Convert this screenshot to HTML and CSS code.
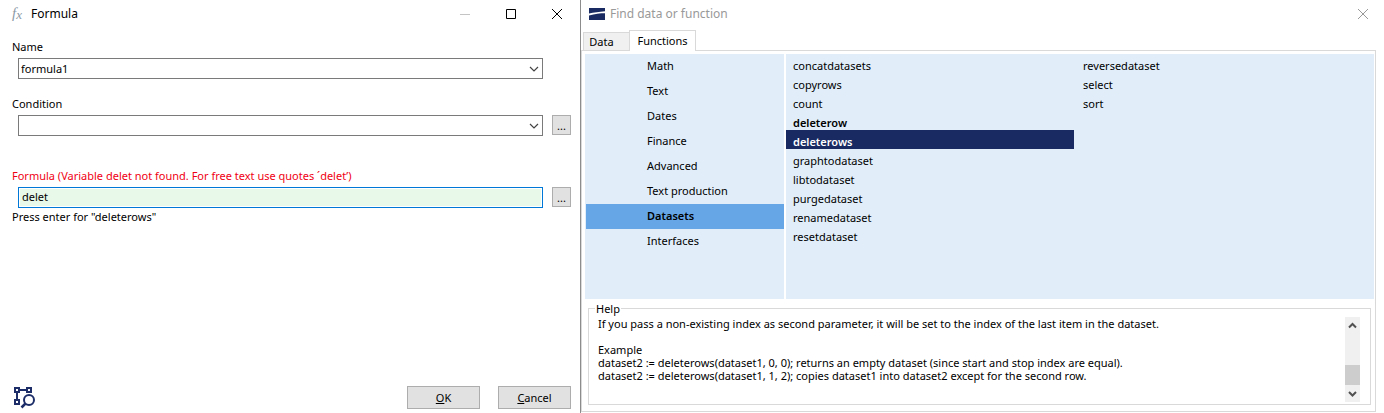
FILE: index.html
```html
<!DOCTYPE html>
<html lang="en">
<head>
<meta charset="utf-8">
<title>Formula</title>
<link rel="stylesheet" href="styles.css">
</head>
<body>
<main class="desktop">
  <section class="window formula" aria-label="Formula">
    <header class="titlebar">
      <span class="fx" aria-hidden="true"><i class="fx-f">f</i><i class="fx-x">x</i></span>
      <h1 class="title">Formula</h1>
      <div class="controls">
        <button class="control" aria-label="Minimize" disabled><svg width="12" height="12" viewBox="0 0 12 12"><path d="M1 6.500h10" stroke="#c4c4c4"/></svg></button>
        <button class="control" aria-label="Maximize"><svg width="12" height="12" viewBox="0 0 12 12"><path d="M1.500 1.500h9v9h-9z" fill="none" stroke="#000"/></svg></button>
        <button class="control" aria-label="Close"><svg width="12" height="12" viewBox="0 0 12 12"><path d="M1 1l10 10M11 1L1 11" stroke="#000"/></svg></button>
      </div>
    </header>
    <form class="form">
      <label class="label" for="name">Name</label>
      <div class="row">
        <div class="combo">
          <select class="field" id="name"><option>formula1</option></select>
          <svg class="chevron" width="10" height="6" viewBox="0 0 10 6"><path d="M1 1l4 4 4-4" fill="none" stroke="#444" stroke-width="1.200"/></svg>
        </div>
      </div>
      <label class="label" for="condition">Condition</label>
      <div class="row">
        <div class="combo">
          <select class="field" id="condition"><option></option></select>
          <svg class="chevron" width="10" height="6" viewBox="0 0 10 6"><path d="M1 1l4 4 4-4" fill="none" stroke="#444" stroke-width="1.200"/></svg>
        </div>
        <button class="button more" type="button" aria-label="Edit condition">...</button>
      </div>
      <label class="label error" for="formula">Formula (Variable delet not found. For free text use quotes ´delet’)</label>
      <div class="row">
        <input class="field active" id="formula" type="text" value="delet" aria-describedby="hint">
        <button class="button more" type="button" aria-label="Edit formula">...</button>
      </div>
      <p class="hint" id="hint">Press enter for "deleterows"</p>
    </form>
    <footer class="footer">
      <svg class="inspect" width="24" height="24" viewBox="0 0 24 24" fill="none" stroke="#1c2d68" stroke-width="2" role="img" aria-label="Inspect">
        <path d="M3 2h4v4H3zM15 2h4v4h-4zM3 14h4v4H3zM7 4h8M5 6v8"/>
        <circle cx="17" cy="14" r="5"/>
        <path d="M13.500 17.500l-4 4" stroke-width="2.500"/>
      </svg>
      <button class="button action"><u>O</u>K</button>
      <button class="button action"><u>C</u>ancel</button>
    </footer>
  </section>

  <section class="window finder" aria-label="Find data or function">
    <header class="titlebar">
      <svg class="logo" width="16" height="12" viewBox="0 0 16 12"><path d="M0 0h16v12H0z" fill="#182a61"/><path d="M0 5.500C5 4.200 10 4.200 16 3.200v2C11 5.200 6 5.600 0 7.500z" fill="#fff"/></svg>
      <h2 class="title muted">Find data or function</h2>
      <div class="controls">
        <button class="control" aria-label="Close"><svg width="12" height="12" viewBox="0 0 12 12"><path d="M1 1l10 10M11 1L1 11" stroke="#999"/></svg></button>
      </div>
    </header>
    <div class="tabs" role="tablist">
      <button class="tab" role="tab" aria-selected="false">Data</button>
      <button class="tab selected" role="tab" aria-selected="true">Functions</button>
    </div>
    <div class="panel" role="tabpanel">
      <div class="browser">
        <nav class="categories">
          <button class="category">Math</button>
          <button class="category">Text</button>
          <button class="category">Dates</button>
          <button class="category">Finance</button>
          <button class="category">Advanced</button>
          <button class="category">Text production</button>
          <button class="category current">Datasets</button>
          <button class="category">Interfaces</button>
        </nav>
        <div class="functions">
          <div class="column">
            <button class="function">concatdatasets</button>
            <button class="function">copyrows</button>
            <button class="function">count</button>
            <button class="function match">deleterow</button>
            <button class="function match picked">deleterows</button>
            <button class="function">graphtodataset</button>
            <button class="function">libtodataset</button>
            <button class="function">purgedataset</button>
            <button class="function">renamedataset</button>
            <button class="function">resetdataset</button>
          </div>
          <div class="column">
            <button class="function">reversedataset</button>
            <button class="function">select</button>
            <button class="function">sort</button>
          </div>
        </div>
      </div>
      <fieldset class="help">
        <legend class="legend">Help</legend>
        <div class="help-text">
          <p>If you pass a non-existing index as second parameter, it will be set to the index of the last item in the dataset.</p>
          <p class="example">Example</p>
          <p>dataset2 := deleterows(dataset1, 0, 0); returns an empty dataset (since start and stop index are equal).</p>
          <p>dataset2 := deleterows(dataset1, 1, 2); copies dataset1 into dataset2 except for the second row.</p>
        </div>
        <div class="scrollbar" aria-hidden="true">
          <svg width="15" height="17" viewBox="0 0 15 17"><path d="M4 10.500l3.500-3.500 3.500 3.500" fill="none" stroke="#505050" stroke-width="2"/></svg>
          <span class="thumb"></span>
          <svg width="15" height="17" viewBox="0 0 15 17"><path d="M4 7l3.500 3.500L11 7" fill="none" stroke="#505050" stroke-width="2"/></svg>
        </div>
      </fieldset>
    </div>
  </section>
</main>
</body>
</html>
```
FILE: styles.css
```css
* { box-sizing: border-box; }

body {
  margin: 0;
  background: #fff;
  color: #000;
  font: 11px/13px "Noto Sans", "Open Sans", sans-serif;
}

button, input, select { font: inherit; color: inherit; }

button {
  padding: 0;
  border: 0;
  background: none;
}

h1, h2, p { margin: 0; }

.desktop {
  display: grid;
  grid-template-columns: 580fr 804fr;
  min-height: 100vh;
}

.window {
  display: flex;
  flex-direction: column;
  min-width: 0;
}

.finder {
  border-left: 1px solid #8c8c8c;
  padding-right: 8px;
}

.titlebar {
  display: flex;
  align-items: center;
  height: 28px;
  padding: 0 17px 0 12px;
}

.finder .titlebar {
  height: 28px;
  padding: 0 7px 0 8px;
}

.title {
  font-size: 12px;
  font-weight: 400;
  line-height: 30px;
}

.muted { color: #999; }

.fx {
  display: flex;
  width: 19px;
  color: #8c9aa6;
  font: 15px/16px "Liberation Serif", serif;
}

.fx-x { font-size: 13px; line-height: 19px; }

.logo { margin-right: 5px; }

.controls {
  display: flex;
  gap: 34px;
  margin-left: auto;
}

.control { display: flex; }

.form {
  flex: 1;
  padding: 12px 9px 0 12px;
}

.label {
  display: block;
  height: 18px;
}

.row {
  display: flex;
  align-items: flex-start;
  height: 21px;
  gap: 9px;
  padding-left: 6px;
  margin-bottom: 18px;
}

.row:has(.more) { margin-bottom: 33px; }

.row:not(:has(.more)) { padding-right: 28px; }

.combo {
  position: relative;
  flex: 1;
}

.field {
  display: block;
  width: 100%;
  height: 21px;
  padding: 0 2px 1px;
  border: 1px solid #7a7a7a;
  border-radius: 0;
  background: #fff;
  appearance: none;
}

.chevron {
  position: absolute;
  right: 4px;
  top: 8px;
  pointer-events: none;
}

.active {
  flex: 1;
  border-color: #0078d7;
  background: #e8f8e9;
  box-shadow: inset 0 0 0 1px #fff;
  outline: 0;
  padding: 0 3px 2px;
}

.error { color: #f00014; }

.row:has(.active) { margin-bottom: 2px; }

.button {
  border: 1px solid #adadad;
  background: #e1e1e1;
}

.more {
  width: 19px;
  height: 20px;
}

.footer {
  display: flex;
  gap: 18px;
  padding: 0 9px 3px 12px;
}

.inspect { margin-right: auto; }

.action {
  width: 73px;
  height: 23px;
}

.tabs {
  display: flex;
  align-items: flex-end;
  height: 22px;
  padding-left: 2px;
}

.tab {
  width: 46px;
  height: 18px;
  border: 1px solid #d9d9d9;
  border-width: 1px 0 0 1px;
  background: #f0f0f0;
  padding-right: 10px;
}

.tab.selected {
  width: 67px;
  height: 21px;
  border-width: 1px 1px 0;
  background: #fff;
  margin-bottom: -1px;
  padding: 0 0 2px;
  z-index: 1;
}

.panel {
  display: flex;
  flex: 1;
  flex-direction: column;
  margin-bottom: 1px;
  border: 1px solid #d9d9d9;
  padding: 3px 1px 6px 3px;
}

.browser {
  display: grid;
  grid-template-columns: 199fr 588fr;
  gap: 2px;
  min-height: 245px;
}

.categories, .functions { background: #e1eefa; }

.categories { padding-left: 1px; }

.category {
  display: block;
  width: 100%;
  height: 25px;
  padding: 0 0 2px 61px;
  text-align: left;
}

.current {
  background: #66a6e7;
  font-weight: 600;
}

.functions {
  display: grid;
  grid-template-columns: 288fr 288fr 8fr;
  gap: 2px;
}

.function {
  display: block;
  width: 100%;
  height: 19px;
  padding: 5px 7px 1px;
  text-align: left;
}

.match { font-weight: 600; }

.picked {
  background: #182a61;
  color: #fff;
}

.help {
  display: flex;
  flex: 1;
  min-width: 0;
  margin: 3px 3px 0;
  border: 1px solid #d9d9d9;
  padding: 2px 10px 2px 9px;
}

.legend {
  margin-left: -3px;
  padding: 0 1px;
}

.help-text { flex: 1; }

.example { margin-top: 13px; }

.scrollbar {
  display: flex;
  flex-direction: column;
  width: 15px;
  background: #f0f0f0;
}

.thumb {
  height: 20px;
  margin-top: auto;
  background: #cdcdcd;
}
```
